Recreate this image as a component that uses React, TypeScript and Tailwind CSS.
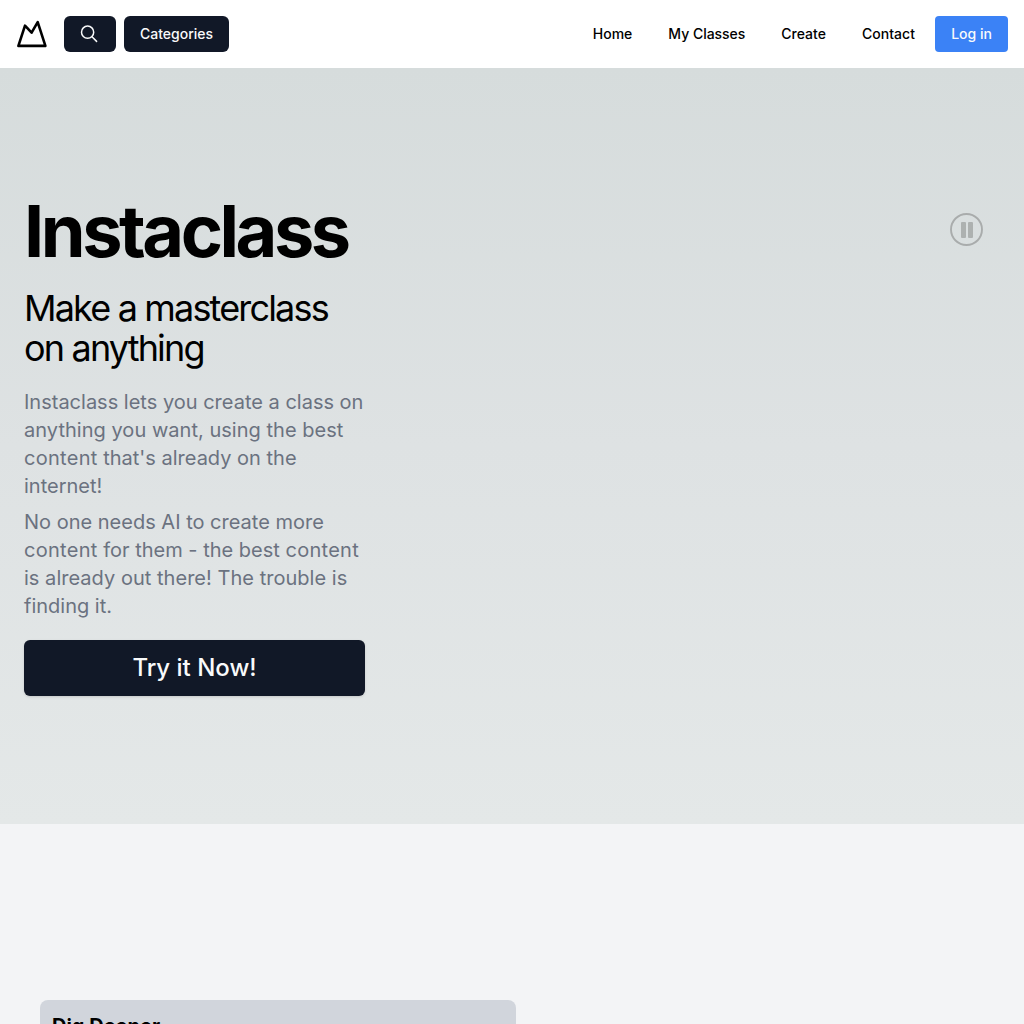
import React from "react";

function Logo() {
  return (
    <svg width="32" height="32" viewBox="0 0 32 32" fill="none" stroke="black" strokeWidth="2.6" strokeLinejoin="round">
      <path d="M2.4 27.9 9 7.7l6.6 7L21.7 4.2l7.7 23.7Z" />
    </svg>
  );
}

function SearchIcon() {
  return (
    <svg width="20" height="20" viewBox="0 0 20 20" fill="none" stroke="#f9fafb" strokeWidth="1.5" strokeLinecap="round">
      <circle cx="7.6" cy="8.2" r="6.1" />
      <path d="m12 12.8 4.6 4.6" />
    </svg>
  );
}

function PauseIcon() {
  return (
    <svg width="34" height="34" viewBox="0 0 34 34" fill="none">
      <circle cx="16.5" cy="17.5" r="15.5" stroke="#a9acac" strokeWidth="1.9" />
      <rect x="11" y="10" width="5" height="16" rx="1" fill="#adb1b0" />
      <rect x="18" y="10" width="5" height="16" rx="1" fill="#adb1b0" />
    </svg>
  );
}

function Content() {
  return <span className="tracking-[0.28px]">content</span>;
}

export default function App() {
  return (
    <div className="h-[1024px] w-full overflow-hidden bg-[#f3f4f6] font-['Inter',sans-serif] text-black">
      <header className="flex h-[68px] items-center bg-white px-4">
        <Logo />
        <button className="ml-4 flex h-9 w-[52px] items-center justify-center rounded-md bg-[#111827]">
          <SearchIcon />
        </button>
        <button className="ml-2 h-9 w-[105px] rounded-md bg-[#111827] text-sm font-medium text-[#f9fafb]">Categories</button>
        <nav className="ml-auto flex items-center gap-9 text-sm font-medium">
          <a>Home</a>
          <a className="tracking-[-0.03px]">My Classes</a>
          <a>Create</a>
          <a className="tracking-[0.05px]">Contact</a>
        </nav>
        <button className="ml-5 h-9 w-[73px] rounded-[4px] bg-[#3b82f6] text-sm font-medium text-[#f9fafb]">Log in</button>
      </header>
      <section className="flex h-[756px] items-start justify-between bg-linear-to-b/srgb from-[#d6dcdc] via-[#dee2e3] to-[#e4e8e8] px-6">
        <div className="w-[341px] pt-[127px]">
          <h1 className="text-[72px] leading-[72px] font-bold tracking-[-3.45px]">Instaclass</h1>
          <h2 className="mt-[21px] text-4xl tracking-[-1.83px]">
            Make a masterclass
            <br />
            on anything
          </h2>
          <p className="mt-5 text-xl text-[#6b7280]">
            Instaclass lets you create a class on <span className="tracking-[0.03px]">anything you want, using the best</span>{" "}
            <Content /> that's already on the internet!
          </p>
          <p className="mt-2 text-xl text-[#6b7280]">
            No one needs AI to create more <Content /> for them - the best <Content />{" "}
            <span className="tracking-[0.03px]">is already out there! The trouble is</span> finding it.
          </p>
          <button className="mt-5 h-14 w-full rounded-md bg-[#111827] text-2xl font-medium text-[#f9fafb] shadow-sm">
            Try it Now!
          </button>
        </div>
        <div className="mt-36 mr-4">
          <PauseIcon />
        </div>
      </section>
      <section className="px-10 pt-44">
        <div className="h-60 w-[476px] rounded-lg bg-[#d1d5dc] p-3">
          <h3 className="text-xl font-bold">Dig Deeper</h3>
        </div>
      </section>
    </div>
  );
}
